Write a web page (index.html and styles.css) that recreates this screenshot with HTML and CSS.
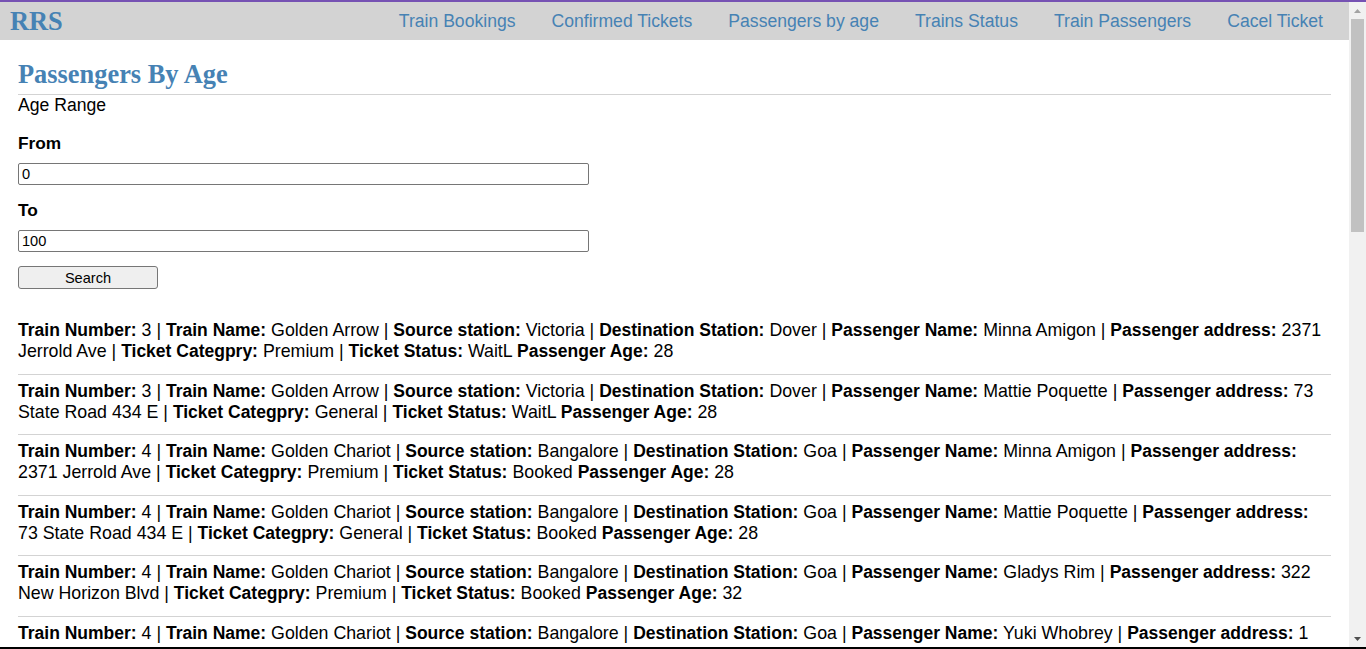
FILE: index.html
```html
<!DOCTYPE html>
<html lang="en">
<head>
<meta charset="utf-8">
<title>RRS - Passengers By Age</title>
<link rel="stylesheet" href="styles.css">
</head>
<body>
<div class="frame">
  <div class="viewport">
    <nav class="topnav">
      <a class="brand" href="#">RRS</a>
      <div class="links">
        <a href="#">Train Bookings</a>
        <a href="#">Confirmed Tickets</a>
        <a href="#">Passengers by age</a>
        <a href="#">Trains Status</a>
        <a href="#">Train Passengers</a>
        <a href="#">Cacel Ticket</a>
      </div>
    </nav>
    <main class="content">
      <h2 class="title">Passengers By Age</h2>
      <div class="subtitle">Age Range</div>
      <form class="range-form">
        <label class="field-label" for="from">From</label>
        <input class="field" id="from" type="text" value="0">
        <label class="field-label" for="to">To</label>
        <input class="field" id="to" type="text" value="100">
        <button class="search-btn" type="button">Search</button>
      </form>
      <div class="records">
        <div class="record"><b>Train Number:</b> 3 | <b>Train Name:</b> Golden Arrow | <b>Source station:</b> Victoria | <b>Destination Station:</b> Dover | <b>Passenger Name:</b> Minna Amigon | <b>Passenger address:</b> 2371 Jerrold Ave | <b>Ticket Categpry:</b> Premium | <b>Ticket Status:</b> WaitL <b>Passenger Age:</b> 28</div>
        <div class="record"><b>Train Number:</b> 3 | <b>Train Name:</b> Golden Arrow | <b>Source station:</b> Victoria | <b>Destination Station:</b> Dover | <b>Passenger Name:</b> Mattie Poquette | <b>Passenger address:</b> 73 State Road 434 E | <b>Ticket Categpry:</b> General | <b>Ticket Status:</b> WaitL <b>Passenger Age:</b> 28</div>
        <div class="record"><b>Train Number:</b> 4 | <b>Train Name:</b> Golden Chariot | <b>Source station:</b> Bangalore | <b>Destination Station:</b> Goa | <b>Passenger Name:</b> Minna Amigon | <b>Passenger address:</b> 2371 Jerrold Ave | <b>Ticket Categpry:</b> Premium | <b>Ticket Status:</b> Booked <b>Passenger Age:</b> 28</div>
        <div class="record"><b>Train Number:</b> 4 | <b>Train Name:</b> Golden Chariot | <b>Source station:</b> Bangalore | <b>Destination Station:</b> Goa | <b>Passenger Name:</b> Mattie Poquette | <b>Passenger address:</b> 73 State Road 434 E | <b>Ticket Categpry:</b> General | <b>Ticket Status:</b> Booked <b>Passenger Age:</b> 28</div>
        <div class="record"><b>Train Number:</b> 4 | <b>Train Name:</b> Golden Chariot | <b>Source station:</b> Bangalore | <b>Destination Station:</b> Goa | <b>Passenger Name:</b> Gladys Rim | <b>Passenger address:</b> 322 New Horizon Blvd | <b>Ticket Categpry:</b> Premium | <b>Ticket Status:</b> Booked <b>Passenger Age:</b> 32</div>
        <div class="record"><b>Train Number:</b> 4 | <b>Train Name:</b> Golden Chariot | <b>Source station:</b> Bangalore | <b>Destination Station:</b> Goa | <b>Passenger Name:</b> Yuki Whobrey | <b>Passenger address:</b> 1 State Route 27 | <b>Ticket Categpry:</b> General | <b>Ticket Status:</b> Booked <b>Passenger Age:</b> 41</div>
        <div class="record"><b>Train Number:</b> 4 | <b>Train Name:</b> Golden Chariot | <b>Source station:</b> Bangalore | <b>Destination Station:</b> Goa | <b>Passenger Name:</b> Fletcher Flosi | <b>Passenger address:</b> 394 Manchester Blvd | <b>Ticket Categpry:</b> Premium | <b>Ticket Status:</b> Booked <b>Passenger Age:</b> 45</div>
      </div>
    </main>
  </div>
  <div class="scrollbar" aria-hidden="true">
    <div class="sb-btn">
      <svg width="7" height="4" viewBox="0 0 7 4"><path d="M0 4H7L3.5 0Z" fill="#a3a3a3"/></svg>
    </div>
    <div class="sb-track">
      <div class="sb-thumb"></div>
    </div>
    <div class="sb-btn">
      <svg width="7" height="4" viewBox="0 0 7 4"><path d="M0 0H7L3.5 4Z" fill="#505050"/></svg>
    </div>
  </div>
</div>
</body>
</html>
```
FILE: styles.css
```css
html, body {
  margin: 0;
  padding: 0;
  height: 100%;
  overflow: hidden;
}

body {
  font-family: "Liberation Sans", Arial, sans-serif;
  font-size: 17.6px;
  color: #000;
  background: #fff;
}

.frame {
  height: 100vh;
  box-sizing: border-box;
  border-top: 2px solid #7652b3;
  border-bottom: 2px solid #000;
  display: flex;
}

.viewport {
  flex: 1;
  min-width: 0;
  overflow: hidden;
}

/* Windows-style scrollbar strip */
.scrollbar {
  width: 17px;
  flex: none;
  background: #f1f1f1;
  display: flex;
  flex-direction: column;
}

.sb-btn {
  height: 17px;
  flex: none;
  display: flex;
  align-items: center;
  justify-content: center;
}

.sb-track {
  flex: 1;
  padding: 0 2px;
}

.sb-thumb {
  height: 213px;
  background: #c1c1c1;
}

/* Top navigation */
.topnav {
  display: flex;
  align-items: center;
  justify-content: space-between;
  height: 38px;
  background: #d3d3d3;
  padding: 0 8px 0 10px;
}

.brand {
  font-family: "Liberation Serif", "Times New Roman", serif;
  font-weight: bold;
  font-size: 26.4px;
  color: #4682b4;
  text-decoration: none;
  line-height: 38px;
}

.links {
  display: flex;
}

.links a {
  color: #4682b4;
  text-decoration: none;
  padding: 0 18px;
  line-height: 38px;
}

/* Content */
.content {
  padding: 0 18px 20px;
}

.title {
  font-family: "Liberation Serif", "Times New Roman", serif;
  font-weight: bold;
  font-size: 26.4px;
  line-height: 30px;
  color: #4682b4;
  margin: 19px 0 0;
  padding-bottom: 5px;
  border-bottom: 1px solid #d3d3d3;
}

.subtitle {
  line-height: 21px;
}

.range-form {
  display: flex;
  flex-direction: column;
  align-items: flex-start;
  margin-top: 17px;
}

.field-label {
  font-weight: bold;
  font-size: 17.3px;
  line-height: 21px;
  margin-bottom: 9px;
}

.field {
  width: 571px;
  height: 22px;
  box-sizing: border-box;
  border: 1px solid #767676;
  border-radius: 2px;
  padding: 1px 3px;
  font-family: "Liberation Sans", Arial, sans-serif;
  font-size: 14.6px;
  color: #000;
  margin: 0 0 15px;
}

.field + .search-btn {
  margin-top: -1px;
}

.search-btn {
  width: 140px;
  height: 23px;
  box-sizing: border-box;
  border: 1px solid #767676;
  border-radius: 3px;
  background: #efefef;
  font-family: "Liberation Sans", Arial, sans-serif;
  font-size: 14.6px;
  color: #000;
  padding: 0;
}

.records {
  margin-top: 25px;
}

.record {
  font-size: 17.8px;
  line-height: 21px;
  padding: 6px 0 11.6px;
  border-bottom: 1px solid #d3d3d3;
}

.record b {
  font-size: 17.5px;
}
```
